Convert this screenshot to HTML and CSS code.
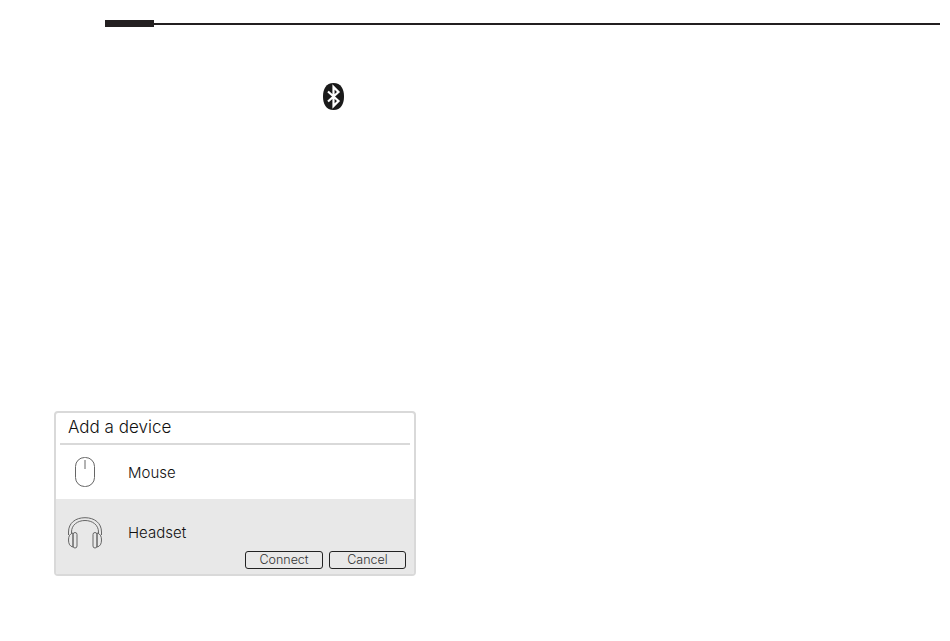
FILE: index.html
```html
<!DOCTYPE html>
<html lang="en">
<head>
    <meta charset="UTF-8">
    <title>Add a device</title>
    <link rel="stylesheet" href="styles.css">
</head>
<body>
    <div class="page-rule">
        <span class="rule-thick"></span>
        <span class="rule-thin"></span>
    </div>

    <div class="bt-line">
        <svg class="bt-icon" width="21" height="27" viewBox="0 0 21 27">
            <path d="M10.500 0 C18 0 21 6 21 13.500 C21 21 18 27 10.500 27 C3 27 0 21 0 13.500 C0 6 3 0 10.500 0 Z" fill="#1a1a1a"/>
            <path d="M5 8.500 L15.500 18 L10.500 23 L10.500 4 L15.500 9 L5 18.500" fill="none" stroke="#fff" stroke-width="2.200"/>
        </svg>
    </div>

    <div class="dialog">
        <div class="dialog-title">Add a device</div>
        <div class="device-row">
            <div class="device-icon">
                <svg width="20" height="30" viewBox="0 0 20 30">
                    <rect x="0.500" y="0.500" width="19" height="29" rx="9" fill="none" stroke="#666" stroke-width="1"/>
                    <path d="M10 3 V12" stroke="#666" stroke-width="1"/>
                </svg>
            </div>
            <span class="device-name">Mouse</span>
        </div>
        <div class="device-row selected">
            <div class="device-main">
                <div class="device-icon">
                    <svg width="36" height="32" viewBox="0 0 36 32">
                        <path d="M1.500 18 V15 C1.500 6 8.500 0.700 18 0.700 C27.500 0.700 34.500 6 34.500 15 V18" fill="none" stroke="#666" stroke-width="1"/>
                        <path d="M4.500 16 V15 C4.500 8 10.500 3.500 18 3.500 C25.500 3.500 31.500 8 31.500 15 V16" fill="none" stroke="#666" stroke-width="1"/>
                        <path d="M6 16 C3 16.500 1.500 19 1.500 23 C1.500 27 3 29.500 6 30 Z" fill="none" stroke="#666" stroke-width="1"/>
                        <path d="M30 16 C33 16.500 34.500 19 34.500 23 C34.500 27 33 29.500 30 30 Z" fill="none" stroke="#666" stroke-width="1"/>
                        <rect x="6" y="15.500" width="4" height="15.500" rx="2" fill="none" stroke="#666" stroke-width="1"/>
                        <rect x="26" y="15.500" width="4" height="15.500" rx="2" fill="none" stroke="#666" stroke-width="1"/>
                    </svg>
                </div>
                <span class="device-name">Headset</span>
            </div>
            <div class="dialog-buttons">
                <button class="btn btn-connect">Connect</button>
                <button class="btn btn-cancel">Cancel</button>
            </div>
        </div>
    </div>
</body>
</html>
```

FILE: styles.css
```css
* { margin: 0; padding: 0; box-sizing: border-box; }
body {
    font-family: Inter, "Liberation Sans", sans-serif;
    background: white; color: #111;
    width: 950px; height: 641px; overflow: hidden;
    padding-top: 20px;
}
.page-rule { display: flex; align-items: center; margin-left: 105px; width: 835px; height: 7px; }
.rule-thick { width: 49px; height: 7px; background: #231f20; }
.rule-thin { flex: 1; height: 2px; margin-top: 1px; background: #231f20; }
.bt-line { margin: 56px 0 0 323px; height: 328px; }
.bt-icon { display: block; }
.dialog {
    width: 362px; height: 165px; margin-left: 54px;
    border: 2px solid #d9d9d9; border-radius: 4px;
    overflow: hidden; display: flex; flex-direction: column;
}
.dialog-title {
    margin: 0 4px; padding-left: 8px; height: 32px;
    border-bottom: 2px solid #d9d9d9;
    font-size: 17px; font-weight: 300; line-height: 28px;
}
.device-row { display: flex; align-items: center; height: 54px; }
.device-icon { width: 58px; margin-right: 14px; flex: none; display: flex; justify-content: center; }
.device-name { font-size: 15px; font-weight: 300; }
.device-row.selected {
    flex: 1; flex-direction: column; align-items: stretch;
    background: #e8e8e8;
}
.device-main { display: flex; align-items: center; height: 64px; padding-top: 3px; flex: none; }
.dialog-buttons { display: flex; justify-content: flex-end; gap: 6px; padding-right: 8px; margin-top: -12px; }
.btn {
    height: 18px; background: transparent; color: #333;
    border: 1px solid #222; border-radius: 3px;
    font-family: inherit; font-size: 12.5px; font-weight: 300; line-height: 16px;
}
.btn-connect { width: 78px; }
.btn-cancel { width: 77px; }
```
